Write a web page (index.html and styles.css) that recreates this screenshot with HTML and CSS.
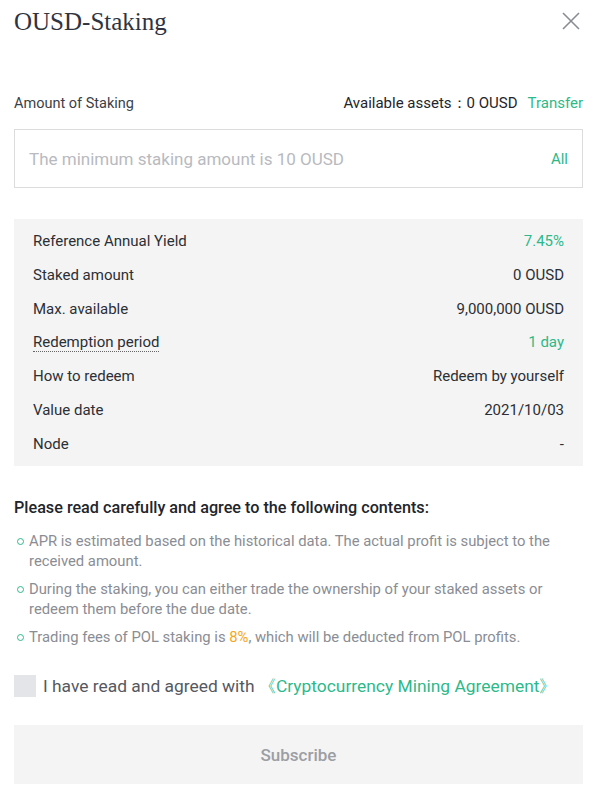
FILE: index.html
```html
<!DOCTYPE html>
<html lang="en">
<head>
    <meta charset="UTF-8">
    <meta name="viewport" content="width=device-width, initial-scale=1.0">
    <title>OUSD-Staking</title>
    <link rel="stylesheet" href="styles.css">
</head>
<body>

    <!-- Header -->
    <div class="header">
        <h1>OUSD-Staking</h1>
        <span class="close">
            <svg width="18" height="18" viewBox="0 0 18 18">
                <path d="M1 1 L17 17 M17 1 L1 17" stroke="#8a8c94" stroke-width="1.6" fill="none"/>
            </svg>
        </span>
    </div>

    <!-- Amount -->
    <div class="amount-head">
        <span class="label">Amount of Staking</span>
        <span class="assets">Available assets：<span class="assets-value">0 OUSD</span><a href="#" class="green">Transfer</a></span>
    </div>
    <div class="amount-input">
        <input type="text" placeholder="The minimum staking amount is 10 OUSD">
        <a href="#" class="green all">All</a>
    </div>

    <!-- Info panel -->
    <div class="info">
        <div class="info-row"><span>Reference Annual Yield</span><span class="green">7.45%</span></div>
        <div class="info-row"><span>Staked amount</span><span>0 OUSD</span></div>
        <div class="info-row"><span>Max. available</span><span>9,000,000 OUSD</span></div>
        <div class="info-row"><span class="dotted">Redemption period</span><span class="green">1 day</span></div>
        <div class="info-row"><span>How to redeem</span><span>Redeem by yourself</span></div>
        <div class="info-row"><span>Value date</span><span>2021/10/03</span></div>
        <div class="info-row"><span>Node</span><span>-</span></div>
    </div>

    <!-- Terms -->
    <h2 class="terms-title">Please read carefully and agree to the following contents:</h2>
    <ul class="terms">
        <li>APR is estimated based on the historical data. The actual profit is subject to the received amount.</li>
        <li>During the staking, you can either trade the ownership of your staked assets or redeem them before the due date.</li>
        <li>Trading fees of POL staking is <span class="orange">8%</span>, which will be deducted from POL profits.</li>
    </ul>

    <label class="agree">
        <span class="checkbox"></span>
        <span>I have read and agreed with <a href="#" class="green">《Cryptocurrency Mining Agreement》</a></span>
    </label>

    <button class="subscribe">Subscribe</button>

</body>
</html>
```

FILE: styles.css
```css
body {
    font-family: Roboto, "Noto Sans", sans-serif;
    margin: 0;
    padding: 0 12px 0 14px;
    background-color: #fff;
    color: #2b2f36;
}
a {
    text-decoration: none;
}
.green {
    color: #2db98a;
}
.orange {
    color: #f5a623;
}
.header {
    display: flex;
    justify-content: space-between;
    align-items: flex-start;
    height: 90px;
}
.header h1 {
    font-family: "Liberation Serif", serif;
    font-weight: normal;
    font-size: 25px;
    margin: 8px 0 0;
    color: #2f3440;
}
.close {
    margin: 12px 3px 0 0;
    cursor: pointer;
}
.amount-head {
    display: flex;
    justify-content: space-between;
    align-items: center;
    height: 26px;
}
.amount-head .label {
    font-size: 14.5px;
    color: #3a3f48;
}
.assets {
    font-size: 15px;
    color: #22252b;
}
.assets-value {
    margin-right: 10px;
}
.amount-input {
    display: flex;
    align-items: center;
    margin-top: 13px;
    height: 57px;
    border: 1px solid #dcdcdc;
    padding: 0 14px;
}
.amount-input input {
    flex: 1;
    border: none;
    outline: none;
    font-family: inherit;
    font-size: 17px;
    color: #333;
    padding: 0;
}
.amount-input input::placeholder {
    color: #b8babf;
}
.all {
    font-size: 15px;
}
.info {
    margin-top: 31px;
    background-color: #f4f4f4;
    padding: 5px 19px;
    font-size: 15px;
}
.info-row {
    display: flex;
    justify-content: space-between;
    align-items: center;
    height: 33.83px;
}
.dotted {
    border-bottom: 1px dotted #666;
    line-height: 18px;
}
.terms-title {
    font-size: 16.2px;
    font-weight: 500;
    line-height: 20px;
    margin: 32px 0 0;
    color: #22252b;
}
.terms {
    list-style: none;
    margin: 13px 0 0;
    padding: 0;
    font-size: 14.8px;
    color: #8a8d94;
    line-height: 20.5px;
}
.terms li {
    position: relative;
    padding-left: 15px;
    margin-bottom: 7px;
}
.terms li::before {
    content: "";
    position: absolute;
    left: 3px;
    top: 7px;
    width: 5px;
    height: 5px;
    border: 1px solid #2db98a;
    border-radius: 50%;
}
.agree {
    display: flex;
    align-items: center;
    margin-top: 28px;
    font-size: 17.4px;
    line-height: 22px;
    color: #555860;
    cursor: pointer;
}
.checkbox {
    width: 22px;
    height: 22px;
    background-color: #e4e5e8;
    margin-right: 7px;
}
.subscribe {
    display: block;
    width: 100%;
    height: 59px;
    margin-top: 28px;
    border: none;
    background-color: #f4f4f4;
    color: #9c9ea4;
    font-family: inherit;
    font-size: 17px;
    font-weight: 500;
    cursor: pointer;
}
```
